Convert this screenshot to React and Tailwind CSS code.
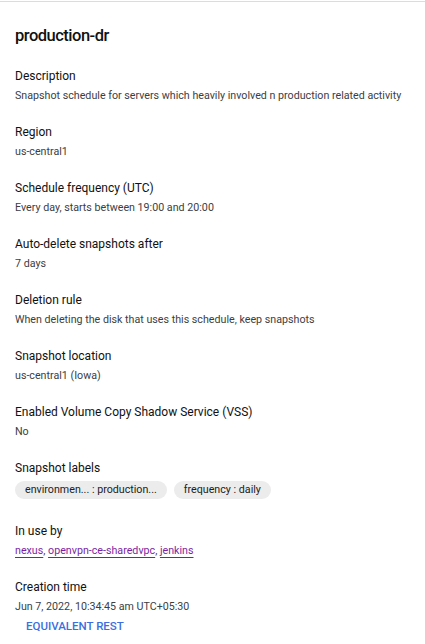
const rows = [
  { label: "Description", value: "Snapshot schedule for servers which heavily involved n production related activity" },
  { label: "Region", value: "us-central1" },
  { label: "Schedule frequency (UTC)", value: "Every day, starts between 19:00 and 20:00" },
  { label: "Auto-delete snapshots after", value: "7 days" },
  { label: "Deletion rule", value: "When deleting the disk that uses this schedule, keep snapshots" },
  { label: "Snapshot location", value: "us-central1 (Iowa)" },
  { label: "Enabled Volume Copy Shadow Service (VSS)", value: "No" },
];

function Field({ label, children }) {
  return (
    <div className="flex flex-col">
      <div className="text-[12px] leading-[20px] text-[#111]">{label}</div>
      <div className="mt-[2px] flex flex-col">{children}</div>
    </div>
  );
}

const linkCls = "text-[#7b1fa2] underline decoration-[#7b1fa2] underline-offset-[3px]";

export default function App() {
  return (
    <div
      className="min-h-[644px] w-[425px] bg-white"
      style={{ fontFamily: "Roboto, 'Liberation Sans', sans-serif" }}
    >
      <div className="pt-[1px]">
        <div className="h-px bg-[#dadce0]" />
      </div>
      <div className="flex flex-col px-[15px] pt-[22px]">
        <h1 className="text-[16.5px] leading-[24px] font-medium tracking-[-0.5px] text-[#111]">production-dr</h1>
        <div className="mt-[18px] flex flex-col gap-[16px]">
          {rows.map((r) => (
            <Field key={r.label} label={r.label}>
              <div className="-mt-[2px] whitespace-nowrap text-[10.7px] leading-[20px] text-[#3c4043]">{r.value}</div>
            </Field>
          ))}
          <Field label="Snapshot labels">
            <div className="flex gap-[7px] pt-[1px]">
              <span className="rounded-full bg-[#ececec] px-[10px] text-[10.7px] leading-[18px] text-[#202124]">
                environmen... : production...
              </span>
              <span className="rounded-full bg-[#ececec] px-[10px] text-[10.7px] leading-[18px] text-[#202124]">
                frequency : daily
              </span>
            </div>
          </Field>
          <div className="mt-[6px]">
            <Field label="In use by">
              <div className="-mt-[2px] text-[10.7px] leading-[20px] text-[#3c4043]">
                <a className={linkCls}>nexus</a>
                {", "}
                <a className={linkCls}>openvpn-ce-sharedvpc</a>
                {", "}
                <a className={linkCls}>jenkins</a>
              </div>
            </Field>
          </div>
          <Field label="Creation time">
            <div className="-mt-[2px] text-[10.7px] leading-[20px] text-[#3c4043]">Jun 7, 2022, 10:34:45 am UTC+05:30</div>
            <button className="-mt-[1px] ml-[11px] self-start text-[11.5px] leading-[20px] font-medium text-[#3b6fe0]">
              EQUIVALENT REST
            </button>
          </Field>
        </div>
      </div>
    </div>
  );
}
